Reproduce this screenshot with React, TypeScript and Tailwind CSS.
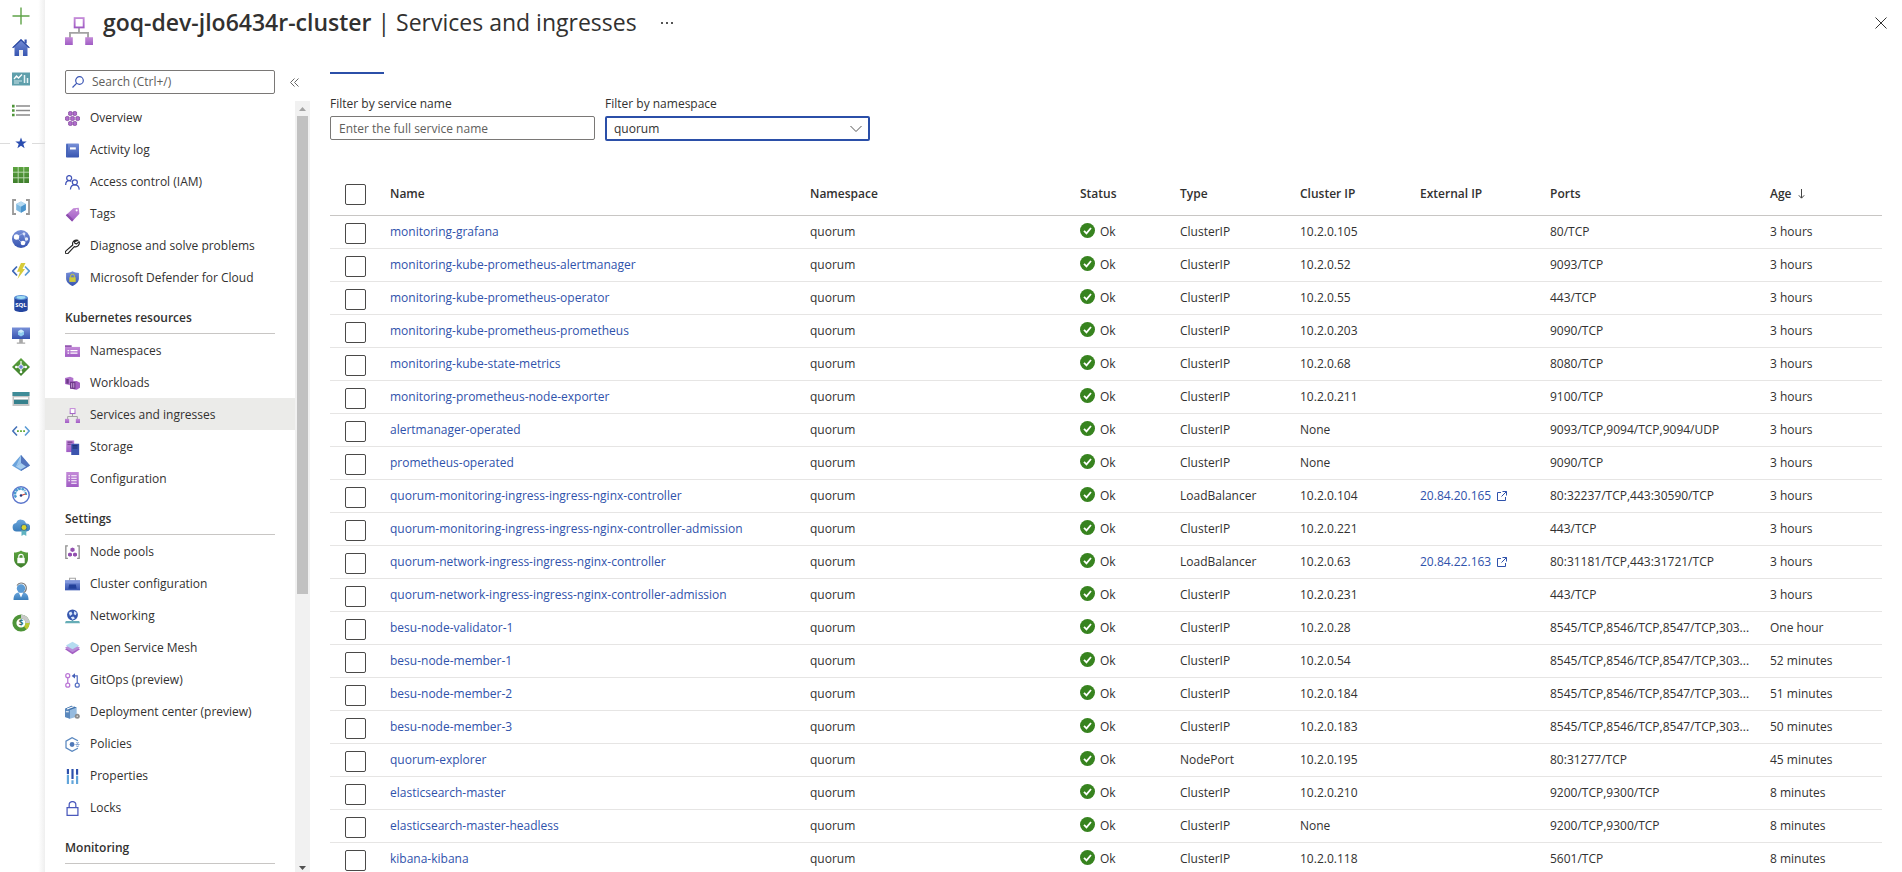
import type { ReactNode } from 'react';

interface MenuItem {
  label: string;
  icon: ReactNode;
  active?: boolean;
}

interface Service {
  name: string;
  type: string;
  clusterIp: string;
  externalIp?: string;
  ports: string;
  age: string;
}

// Shared gradients, referenced by id from the icons below
function Gradients() {
  return (
    <svg width="0" height="0" className="absolute" aria-hidden="true">
      <defs>
        <linearGradient id="purple" x1="0" y1="0" x2="0" y2="1">
          <stop offset="0" stopColor="#c48bd8" />
          <stop offset="1" stopColor="#a05cc4" />
        </linearGradient>
        <linearGradient id="blue" x1="0" y1="0" x2="0" y2="1">
          <stop offset="0" stopColor="#7890d8" />
          <stop offset="1" stopColor="#3654b0" />
        </linearGradient>
        <linearGradient id="sky" x1="0" y1="0" x2="0" y2="1">
          <stop offset="0" stopColor="#6aa6dc" />
          <stop offset="1" stopColor="#3a7cba" />
        </linearGradient>
        <linearGradient id="green" x1="0" y1="0" x2="0" y2="1">
          <stop offset="0" stopColor="#5ca33f" />
          <stop offset="1" stopColor="#3f7f2c" />
        </linearGradient>
      </defs>
    </svg>
  );
}

function Icon({ size = 18, children }: { size?: number; children: ReactNode }) {
  return (
    <svg width={size} height={size} viewBox="0 0 18 18" fill="none" className="shrink-0" aria-hidden="true">
      {children}
    </svg>
  );
}

function ServicesShape() {
  return (
    <>
      <path d="M9 7v3.200M3.200 13.500v-3.300h11.600v3.300" stroke="#a3a3a3" strokeWidth="1.200" />
      <rect x="6.200" y="0.700" width="5.800" height="6" fill="#fff" stroke="url(#purple)" strokeWidth="1.200" />
      <rect x="0" y="13" width="5" height="5" fill="url(#purple)" />
      <rect x="13" y="13" width="5" height="5" fill="url(#purple)" />
    </>
  );
}

const railItems = [
  { label: 'Create a resource', icon: <path d="M9 0.500v17M0.500 9h17" stroke="#5fa348" strokeWidth="1.400" /> },
  {
    label: 'Home',
    icon: (
      <>
        <path d="M12.500 1.500h2.200v4h-2.200z" fill="#3654b0" />
        <path d="M9 1 17.500 9.500H15.500V18H2.500V9.500H.5z" fill="url(#blue)" />
        <path d="M9 1 17.800 9.400l-.8.9L9 2.800 1 10.300l-.8-.9z" fill="#2c49a0" />
        <path d="M7 12h4v6H7z" fill="#f0f0f0" />
      </>
    ),
  },
  {
    label: 'Dashboard',
    icon: (
      <>
        <rect y="2.500" width="18" height="13" fill="#5f9fab" />
        <path d="M2 9l2.500-3 2 2L10 4.500" stroke="#fff" strokeWidth="1.300" />
        <path d="M2 11h8M2 13h5" stroke="#cfe6ea" strokeWidth="1" />
        <path d="M12.500 5v8M15.500 8v5" stroke="#e6f3f5" strokeWidth="1.500" />
      </>
    ),
  },
  {
    label: 'All services',
    icon: (
      <>
        <path d="M4 4h14M4 8.500h14M4 13h14" stroke="#8a8a8a" strokeWidth="1.400" />
        <path d="M0 2.800h2.600v2.600H0zM0 7.200h2.600v2.600H0zM0 11.700h2.600v2.600H0z" fill="#4e9438" />
      </>
    ),
  },
  {
    label: 'Favorites',
    icon: <path d="M9 3.500l1.500 4h4.200l-3.400 2.600 1.300 4.200L9 11.800l-3.600 2.500 1.300-4.200-3.400-2.600h4.200z" fill="#2a4db0" />,
  },
  {
    label: 'All resources',
    icon: (
      <>
        <path d="M1 1h16v16H1z" fill="url(#green)" />
        <path d="M6.200 1v16M11.800 1v16M1 6.200h16M1 11.800h16" stroke="#c2dfb8" strokeWidth="0.900" />
      </>
    ),
  },
  {
    label: 'Resource groups',
    icon: (
      <>
        <path d="M4 2H1v14h3M14 2h3v14h-3" stroke="#999" strokeWidth="1.800" />
        <path d="M9 3.500 13.800 6v6L9 14.700 4.200 12V6z" fill="#7db8e0" />
        <path d="M9 3.500 13.800 6 9 8.800 4.200 6z" fill="#b5daf2" />
        <path d="M9 8.800 13.800 6v6L9 14.700z" fill="#4b94cc" />
      </>
    ),
  },
  {
    label: 'App Services',
    icon: (
      <>
        <circle cx="9" cy="9" r="9" fill="url(#blue)" />
        <path d="M4 7l8-4M4.500 7.500 10 13M12 3.500l2 8M10 13l4-1" stroke="#a9bbec" strokeWidth="0.800" />
        <circle cx="4.500" cy="7" r="2.700" fill="#fff" />
        <circle cx="12" cy="4" r="1.400" fill="#dbe3fa" />
        <circle cx="11" cy="13" r="2.300" fill="#fff" />
        <circle cx="14.500" cy="9" r="1.700" fill="#e6ecfb" />
      </>
    ),
  },
  {
    label: 'Function App',
    icon: (
      <>
        <path d="M5 4.500.8 9 5 13.500" stroke="#3e68b8" strokeWidth="1.700" />
        <path d="M13 4.500 17.200 9 13 13.500" stroke="#5a9bd5" strokeWidth="1.700" />
        <path d="M9 1h4.500L10.500 7H13L5.500 17 8 9.800H5z" fill="#d6cb3a" />
      </>
    ),
  },
  {
    label: 'SQL databases',
    icon: (
      <>
        <path d="M2.300 3.500v12C2.300 17 5.500 18 9 18s6.700-1 6.700-2.500v-12z" fill="#2445a0" />
        <ellipse cx="9" cy="3.500" rx="6.700" ry="2.500" fill="#5c93d8" />
        <ellipse cx="9" cy="3.500" rx="4.500" ry="1.400" fill="#a0dcf2" />
        <text x="9" y="12.500" textAnchor="middle" fontSize="6" fontWeight="700" fill="#fff">
          SQL
        </text>
      </>
    ),
  },
  {
    label: 'Virtual machines',
    icon: (
      <>
        <rect y="1.500" width="18" height="11.500" fill="url(#blue)" />
        <path d="M9 3.500l3 1.700v3.600l-3 1.700-3-1.700V5.200z" fill="#8fcdf0" />
        <path d="M9 3.500l3 1.700L9 7 6 5.200z" fill="#cdeafa" />
        <path d="M7.200 13h3.600v3.500h2.400v1.200H4.800v-1.200h2.400z" fill="#a8a8a8" />
      </>
    ),
  },
  {
    label: 'Load balancers',
    icon: (
      <>
        <path d="M9 0l9 9-9 9-9-9z" fill="url(#green)" />
        <path d="M9 3v11M5 9h8" stroke="#fff" strokeWidth="1.200" />
        <circle cx="9" cy="9" r="2.300" fill="#7083d8" stroke="#fff" strokeWidth="0.800" />
        <circle cx="4.300" cy="9" r="1.300" fill="#fff" />
        <circle cx="13.700" cy="9" r="1.300" fill="#fff" />
        <circle cx="9" cy="14" r="1.300" fill="#fff" />
      </>
    ),
  },
  {
    label: 'Storage accounts',
    icon: (
      <>
        <path d="M.5 2h17v14H.5z" fill="#c4c4c4" />
        <path d="M.5 2h17v4H.5z" fill="#3f8c98" />
        <path d="M2 7.300h14v2H2z" fill="#fff" />
        <path d="M2 9.800h14V14H2z" fill="#35808c" />
      </>
    ),
  },
  {
    label: 'Virtual networks',
    icon: (
      <>
        <path d="M5 4.500.8 9 5 13.500" stroke="#4673b8" strokeWidth="1.600" />
        <path d="M13 4.500 17.200 9 13 13.500" stroke="#5a9bd5" strokeWidth="1.600" />
        <path d="M5 8.200h1.800v1.800H5zM8.100 8.200h1.800v1.800H8.100zM11.200 8.200H13v1.800h-1.800z" fill="#60aa38" />
      </>
    ),
  },
  {
    label: 'Azure Active Directory',
    icon: (
      <>
        <path d="M9 1 0 11.500l9 5.500 9-5.500z" fill="#6ba3dc" />
        <path d="M9 1v16l9-5.500z" fill="#5375bd" />
        <path d="M9 9l5 3.500L9 15.500 4 12.500z" fill="#a7cdef" />
        <path d="M9 1 4 12.500 9 9z" fill="#9cc6ec" />
      </>
    ),
  },
  {
    label: 'Monitor',
    icon: (
      <>
        <circle cx="9" cy="9" r="8.200" fill="#fff" stroke="#5b76cc" strokeWidth="1.500" />
        <path d="M4 11.500A5.500 5.500 0 0 1 13 5" stroke="#4a9bd0" strokeWidth="2.500" strokeDasharray="2.600 0.600" />
        <path d="M13.200 6a5.500 5.500 0 0 1 1 3" stroke="#4a9bd0" strokeWidth="2" />
        <path d="M9 9.500l4.500-1.500" stroke="#d04434" strokeWidth="1.300" />
        <circle cx="9" cy="9.500" r="1.300" fill="#27357a" />
      </>
    ),
  },
  {
    label: 'Advisor',
    icon: (
      <>
        <path d="M4.500 13.500a4.300 4.300 0 0 1-.4-8.500A5.200 5.200 0 0 1 14 5.500a4 4 0 0 1 .5 8z" fill="url(#sky)" />
        <path d="M9.500 11h4.800v7l-2.400-1.500L9.500 18z" fill="#5fb3c2" />
        <circle cx="12" cy="9.500" r="3.300" fill="#3d6f8a" />
        <circle cx="12" cy="9.500" r="2.400" fill="#d8d32f" />
      </>
    ),
  },
  {
    label: 'Microsoft Defender for Cloud',
    icon: (
      <>
        <path d="M9 .5c2 1.400 4.500 2 7 2V9c0 4.500-3.500 7-7 8.800C5.500 16 2 13.500 2 9V2.500c2.500 0 5-.6 7-2z" fill="url(#green)" />
        <rect x="5.300" y="7.800" width="7.400" height="5.400" fill="#fff" />
        <path d="M6.800 8V6.500a2.200 2.200 0 0 1 4.400 0V8" stroke="#fff" strokeWidth="1.200" />
      </>
    ),
  },
  {
    label: 'Help and support',
    icon: (
      <>
        <path d="M5 3.500A5 5 0 0 1 14.300 6c0 2.500-1.200 4-3 4.800" stroke="#777" strokeWidth="1.200" />
        <path d="M1.500 18c0-4.500 1.500-7 5-7.500h5c3.500.5 5 3 5 7.500z" fill="url(#sky)" />
        <circle cx="9" cy="6.500" r="4.200" fill="#5b9bd5" />
        <path d="M7 11h4l-2 4.500z" fill="#fff" />
      </>
    ),
  },
  {
    label: 'Cost Management',
    icon: (
      <>
        <circle cx="9" cy="9" r="6.600" stroke="#4e9438" strokeWidth="4" />
        <path d="M9 2.400A6.600 6.600 0 0 1 15.600 9" stroke="#c9c9c9" strokeWidth="4" />
        <path d="M15.600 9a6.600 6.600 0 0 1-2.300 5" stroke="#bcc831" strokeWidth="4" />
        <text x="9" y="12" textAnchor="middle" fontSize="8" fontWeight="700" fill="#2e6e74">
          $
        </text>
      </>
    ),
  },
];

const overviewMenu: MenuItem[] = [
  {
    label: 'Overview',
    icon: (
      <g fill="#b06ccc" stroke="#7d4496" strokeWidth="0.800">
        <path d="M4.300 1.200 6.400.4l2.200.8v3.600l-2.200.8-2.100-.8zM9.600 1.200l2.100-.8 2.200.8v3.600l-2.200.8-2.100-.8zM.6 7.200l2.200-.8 2.200.8v3.600l-2.200.8-2.200-.8zM6.800 7.200 9 6.400l2.200.8v3.600l-2.200.8-2.200-.8zM13 7.200l2.200-.8 2.200.8v3.600l-2.200.8-2.200-.8zM4.300 13.200l2.100-.8 2.200.8v3.600l-2.200.8-2.100-.8zM9.600 13.200l2.100-.8 2.200.8v3.600l-2.200.8-2.100-.8z" />
      </g>
    ),
  },
  {
    label: 'Activity log',
    icon: (
      <>
        <rect x="1.200" y=".5" width="15.600" height="17" rx="1" fill="url(#blue)" />
        <path d="M1.700 1.500h1.800v15H1.700z" fill="#4564b8" />
        <path d="M6 5.200h7v2.600H6z" fill="#fff" />
      </>
    ),
  },
  {
    label: 'Access control (IAM)',
    icon: (
      <g stroke="#4254b8" strokeWidth="1.500">
        <circle cx="5" cy="3.700" r="3" />
        <path d="M.8 12c0-3 1.500-5.200 4.200-5.200 1 0 1.900.3 2.600.9" />
        <circle cx="11.800" cy="8.800" r="3" />
        <path d="M6.500 17.500c.2-3.500 2-5.600 5.300-5.600s5 2.100 5.300 5.600" />
      </g>
    ),
  },
  {
    label: 'Tags',
    icon: (
      <>
        <path d="M10 1.500 16.500.8 17.300 8 8.500 17.300 1 10z" fill="url(#purple)" />
        <path d="M1 10l7.500 7.300 1.800-2L3 8z" fill="#8d4eae" />
        <circle cx="14" cy="4" r="1.300" fill="#fff" />
      </>
    ),
  },
  {
    label: 'Diagnose and solve problems',
    icon: (
      <path
        d="M15.500 1.600a4.600 4.600 0 0 0-6.200 5.600L1.500 14a2 2 0 1 0 2.700 2.600l7-7.500a4.600 4.600 0 0 0 5.700-6l-2.900 2.700-2.100-.6-.6-2z"
        stroke="#222"
        strokeWidth="1.400"
        strokeLinejoin="round"
      />
    ),
  },
  {
    label: 'Microsoft Defender for Cloud',
    icon: (
      <>
        <path d="M9 .3c2.300 1.500 5 2 7.700 2V9c0 4.500-4 7.200-7.700 9C5.300 16.200 1.300 13.500 1.300 9V2.300C4 2.300 6.700 1.800 9 .3z" fill="url(#blue)" />
        <path d="M6.700 8V6.200a2.300 2.300 0 0 1 4.600 0V8" stroke="#c9c93a" strokeWidth="1.200" />
        <rect x="5.200" y="7.600" width="7.600" height="5.500" fill="#cfcb3a" />
      </>
    ),
  },
];

const kubernetesMenu: MenuItem[] = [
  {
    label: 'Namespaces',
    icon: (
      <>
        <path d="M0 1.500h8v3H0z" fill="#8f52ad" />
        <path d="M0 3.500h18v12H0z" fill="url(#purple)" />
        <path d="M3 8h2M3 11h2M6.500 8h8.500M6.500 11h8.500" stroke="#fff" strokeWidth="1.500" />
      </>
    ),
  },
  {
    label: 'Workloads',
    icon: (
      <>
        <path d="M0 2.500 6 1l4 1.500v7L6 11 0 9.500z" fill="#b173cc" />
        <path d="M1.500 3.500h3v5.800h-3z" fill="#6e3a8a" />
        <path d="M6 7l8-1 4 2v6l-4 2.500L6 15z" fill="#a35fc2" />
        <path d="M6 7h6.500v9L6 15z" fill="#6e3a8a" />
        <path d="M8 8.500v5.500M10.500 8.500v5.500" stroke="#d8b5e6" strokeWidth="1" />
      </>
    ),
  },
  { label: 'Services and ingresses', icon: <ServicesShape />, active: true },
  {
    label: 'Storage',
    icon: (
      <>
        <path d="M1.500.5h9.500v14H1.500z" fill="url(#purple)" />
        <path d="M3 2.500h6M3 5h4" stroke="#6e3a8a" strokeWidth="1.300" />
        <path d="M7.500 4.500H17V18H7.500z" fill="#3c54ae" />
        <path d="M9 7h6M9 9.500h6" stroke="#182a6c" strokeWidth="1.300" />
      </>
    ),
  },
  {
    label: 'Configuration',
    icon: (
      <>
        <path d="M1.500 0h15v18h-15z" fill="url(#purple)" />
        <path d="M4 4.500h2M7.500 4.500H14M4 7.500h2M7.500 7.500H14M4 10.500h2M7.500 10.500H14M7.500 13.500H14" stroke="#fff" strokeWidth="1.400" />
      </>
    ),
  },
];

const settingsMenu: MenuItem[] = [
  {
    label: 'Node pools',
    icon: (
      <>
        <path d="M3.500 1H1v15h2.500M14.500 1H17v15h-2.500" stroke="#8f8f8f" strokeWidth="1.600" />
        <path d="M9 3l2.500 1.200v3L9 8.400 6.500 7.200v-3zM6 9l2.400 1.100v2.800L6 14l-2.400-1.100v-2.800zM12 9l2.400 1.100v2.800L12 14l-2.400-1.100v-2.800z" fill="#9350b0" />
      </>
    ),
  },
  {
    label: 'Cluster configuration',
    icon: (
      <>
        <path d="M5.500 4.500v-3h7v3" stroke="#a5a5a5" strokeWidth="1.300" />
        <path d="M0 4h18v12H0z" fill="url(#blue)" />
        <path d="M0 4h18v3.500H0z" fill="#8197dc" />
        <path d="M5 9h8l1 5H4z" fill="#22409a" />
      </>
    ),
  },
  {
    label: 'Networking',
    icon: (
      <>
        <path d="M1 14.500h16L18 17H0z" fill="#66adb6" />
        <path d="M8 12h2v3H8z" fill="#66adb6" />
        <circle cx="9" cy="7" r="6.500" fill="#3556ae" />
        <path d="M4.500 4.500 7.500 3 9 6 6 8.500zM11 2.500l3 2-1 3-2.500-1.200zM7 10l3-1 2 2-3 2z" fill="#d8e6fa" />
      </>
    ),
  },
  {
    label: 'Open Service Mesh',
    icon: (
      <>
        <path d="M9 4.500 18 10l-9 6-9-6z" fill="#a560c4" />
        <path d="M9 2.500 18 8l-9 5.500L0 8z" fill="#b98cd9" />
        <path d="M9 1l8 4.500L9 10 1 5.500z" fill="#b4dcf0" />
      </>
    ),
  },
  {
    label: 'GitOps (preview)',
    icon: (
      <>
        <g stroke="#bb77d6" strokeWidth="1.500">
          <circle cx="3.300" cy="3.200" r="2.400" />
          <path d="M3.300 5.600v6.800" />
          <circle cx="3.300" cy="14.600" r="2.400" />
        </g>
        <g stroke="#5a72c4" strokeWidth="1.500">
          <path d="M9.500 3.500h5.200v8.800" />
          <circle cx="14.700" cy="14.600" r="2.400" />
        </g>
        <path d="M12 .3v6.400L8 3.500z" fill="#4560b8" />
      </>
    ),
  },
  {
    label: 'Deployment center (preview)',
    icon: (
      <>
        <path d="M0 4.500 8 1l6 2v11l-8 2.500-6-2z" fill="#96bbdf" />
        <path d="M0 4.500 6 6v10.500l-6-2z" fill="#5a88bc" />
        <path d="M0 4.500 8 1l6 2-8 3z" fill="#3f71ab" />
        <path d="M2.500 4.800 10.500 1.700M1 8h3.500" stroke="#fff" strokeWidth="1.300" />
        <circle cx="14.700" cy="13.500" r="3" fill="#8c8c8c" />
        <circle cx="14.700" cy="13.500" r="1" fill="#ddd" />
      </>
    ),
  },
  {
    label: 'Policies',
    icon: (
      <>
        <path d="M15.500 4.500 8.500.8 1.200 5v8l7.300 4.200 7-3.700" stroke="#5a88c0" strokeWidth="1.500" />
        <circle cx="8.500" cy="9" r="2.900" fill="#4f78b8" />
        <path d="M13.500 6.500l1.500 1 1.500-1M13.500 10.500l1.500 1 1.500-1M12.500 9h5" stroke="#8aa8d4" strokeWidth="1.300" />
      </>
    ),
  },
  {
    label: 'Properties',
    icon: (
      <>
        <path d="M3.500 0v6M9 0v12M14.500 0v7" stroke="#2c50ac" strokeWidth="2.600" />
        <path d="M3.500 7v11M9 13.500V18M14.500 8v10" stroke="#62a5da" strokeWidth="2.600" />
      </>
    ),
  },
  {
    label: 'Locks',
    icon: (
      <g stroke="#4a59bc" strokeWidth="1.500">
        <path d="M2.500 7.800h13v9.400h-13z" />
        <path d="M5 7.800V4.700a4 4 0 0 1 8 0v3.100" />
      </g>
    ),
  },
];

const services: Service[] = [
  { name: 'monitoring-grafana', type: 'ClusterIP', clusterIp: '10.2.0.105', ports: '80/TCP', age: '3 hours' },
  { name: 'monitoring-kube-prometheus-alertmanager', type: 'ClusterIP', clusterIp: '10.2.0.52', ports: '9093/TCP', age: '3 hours' },
  { name: 'monitoring-kube-prometheus-operator', type: 'ClusterIP', clusterIp: '10.2.0.55', ports: '443/TCP', age: '3 hours' },
  { name: 'monitoring-kube-prometheus-prometheus', type: 'ClusterIP', clusterIp: '10.2.0.203', ports: '9090/TCP', age: '3 hours' },
  { name: 'monitoring-kube-state-metrics', type: 'ClusterIP', clusterIp: '10.2.0.68', ports: '8080/TCP', age: '3 hours' },
  { name: 'monitoring-prometheus-node-exporter', type: 'ClusterIP', clusterIp: '10.2.0.211', ports: '9100/TCP', age: '3 hours' },
  { name: 'alertmanager-operated', type: 'ClusterIP', clusterIp: 'None', ports: '9093/TCP,9094/TCP,9094/UDP', age: '3 hours' },
  { name: 'prometheus-operated', type: 'ClusterIP', clusterIp: 'None', ports: '9090/TCP', age: '3 hours' },
  { name: 'quorum-monitoring-ingress-ingress-nginx-controller', type: 'LoadBalancer', clusterIp: '10.2.0.104', externalIp: '20.84.20.165', ports: '80:32237/TCP,443:30590/TCP', age: '3 hours' },
  { name: 'quorum-monitoring-ingress-ingress-nginx-controller-admission', type: 'ClusterIP', clusterIp: '10.2.0.221', ports: '443/TCP', age: '3 hours' },
  { name: 'quorum-network-ingress-ingress-nginx-controller', type: 'LoadBalancer', clusterIp: '10.2.0.63', externalIp: '20.84.22.163', ports: '80:31181/TCP,443:31721/TCP', age: '3 hours' },
  { name: 'quorum-network-ingress-ingress-nginx-controller-admission', type: 'ClusterIP', clusterIp: '10.2.0.231', ports: '443/TCP', age: '3 hours' },
  { name: 'besu-node-validator-1', type: 'ClusterIP', clusterIp: '10.2.0.28', ports: '8545/TCP,8546/TCP,8547/TCP,303...', age: 'One hour' },
  { name: 'besu-node-member-1', type: 'ClusterIP', clusterIp: '10.2.0.54', ports: '8545/TCP,8546/TCP,8547/TCP,303...', age: '52 minutes' },
  { name: 'besu-node-member-2', type: 'ClusterIP', clusterIp: '10.2.0.184', ports: '8545/TCP,8546/TCP,8547/TCP,303...', age: '51 minutes' },
  { name: 'besu-node-member-3', type: 'ClusterIP', clusterIp: '10.2.0.183', ports: '8545/TCP,8546/TCP,8547/TCP,303...', age: '50 minutes' },
  { name: 'quorum-explorer', type: 'NodePort', clusterIp: '10.2.0.195', ports: '80:31277/TCP', age: '45 minutes' },
  { name: 'elasticsearch-master', type: 'ClusterIP', clusterIp: '10.2.0.210', ports: '9200/TCP,9300/TCP', age: '8 minutes' },
  { name: 'elasticsearch-master-headless', type: 'ClusterIP', clusterIp: 'None', ports: '9200/TCP,9300/TCP', age: '8 minutes' },
  { name: 'kibana-kibana', type: 'ClusterIP', clusterIp: '10.2.0.118', ports: '5601/TCP', age: '8 minutes' },
];

function Rail() {
  return (
    <nav aria-label="Favorites" className="w-[45px] shrink-0 bg-gradient-to-r from-white from-85% to-[#efefef]">
      {railItems.map((item, i) => (
        <a
          key={item.label}
          href="#"
          aria-label={item.label}
          className={`flex items-center ${i === 0 ? 'h-[31px]' : 'h-8'} ${item.label === 'Favorites' ? '' : 'pl-3'}`}
        >
          {item.label === 'Favorites' ? (
            <>
              <span className="w-[10px] h-px bg-[#dcdcdc] mr-[2px]" />
              <Icon>{item.icon}</Icon>
              <span className="flex-1 h-px bg-[#dcdcdc] ml-[2px]" />
            </>
          ) : (
            <Icon>{item.icon}</Icon>
          )}
        </a>
      ))}
    </nav>
  );
}

function MenuList({ items }: { items: MenuItem[] }) {
  return (
    <ul>
      {items.map((item) => (
        <li key={item.label}>
          <a href="#" className={`flex items-center gap-[10px] h-8 pl-5 pt-[2px] ${item.active ? 'bg-[#ebebe9]' : ''}`}>
            <Icon size={15}>{item.icon}</Icon>
            <span>{item.label}</span>
          </a>
        </li>
      ))}
    </ul>
  );
}

function MenuHeading({ children }: { children: ReactNode }) {
  return (
    <h2 className="h-[41px] ml-5 mr-5 flex items-center pt-[10px] border-b border-[#c8c6c4] font-semibold text-[#323130]">
      {children}
    </h2>
  );
}

function Scrollbar() {
  return (
    <div className="w-[15px] shrink-0 bg-[#f1f1f1] flex flex-col items-center" aria-hidden="true">
      <svg width="15" height="15" viewBox="0 0 15 15" className="shrink-0">
        <path d="M4 10l3.500-4 3.500 4z" fill="#a3a3a3" />
      </svg>
      <div className="w-[11px] h-[62%] bg-[#c1c1c1]" />
      <div className="flex-1" />
      <svg width="15" height="15" viewBox="0 0 15 15" className="shrink-0">
        <path d="M4 9l3.500 4L11 9z" fill="#505050" />
      </svg>
    </div>
  );
}

function SideMenu() {
  return (
    <div className="w-[265px] shrink-0 flex flex-col min-h-0">
      <div className="flex items-center h-[37px] pl-5 pb-px shrink-0">
        <label className="w-[210px] h-6 flex items-center gap-2 pl-[6px] border border-[#7a7876] rounded-xs">
          <svg width="12" height="12" viewBox="0 0 12 12" fill="none" stroke="#3a55b4" strokeWidth="1.200" aria-hidden="true">
            <circle cx="7.500" cy="4.500" r="3.800" />
            <path d="M4.800 7.200.5 11.500" />
          </svg>
          <input
            type="text"
            aria-label="Search"
            placeholder="Search (Ctrl+/)"
            className="flex-1 min-w-0 outline-none bg-transparent placeholder:text-[#605e5c]"
          />
        </label>
        <button aria-label="Collapse menu" className="ml-[15px]">
          <svg width="9" height="9" viewBox="0 0 9 9" fill="none" stroke="#666" strokeWidth="1" aria-hidden="true">
            <path d="M4.500.5l-4 4 4 4M8.500.5l-4 4 4 4" />
          </svg>
        </button>
      </div>
      <div className="flex flex-1 min-h-0">
        <nav aria-label="Cluster menu" className="flex-1 overflow-hidden">
          <MenuList items={overviewMenu} />
          <MenuHeading>Kubernetes resources</MenuHeading>
          <MenuList items={kubernetesMenu} />
          <MenuHeading>Settings</MenuHeading>
          <MenuList items={settingsMenu} />
          <MenuHeading>Monitoring</MenuHeading>
        </nav>
        <Scrollbar />
      </div>
    </div>
  );
}

function Filters() {
  return (
    <div className="flex gap-[10px] pt-[22px]">
      <div className="w-[265px]">
        <label htmlFor="service-name" className="block h-5 leading-4">
          Filter by service name
        </label>
        <input
          id="service-name"
          type="text"
          placeholder="Enter the full service name"
          className="block w-full h-6 px-2 border border-[#7a7876] rounded-xs outline-none placeholder:text-[#605e5c]"
        />
      </div>
      <div className="w-[265px]">
        <label htmlFor="namespace" className="block h-5 leading-4">
          Filter by namespace
        </label>
        <div className="relative">
          <select
            id="namespace"
            defaultValue="quorum"
            className="block w-full h-[25px] px-[7px] appearance-none border-2 border-[#2b4fa8] rounded-xs bg-white outline-none"
          >
            <option>quorum</option>
          </select>
          <svg
            width="12"
            height="8"
            viewBox="0 0 12 8"
            fill="none"
            stroke="#555"
            className="absolute right-2 top-[9px] pointer-events-none"
            aria-hidden="true"
          >
            <path d="M.5 1 6 6.500 11.500 1" />
          </svg>
        </div>
      </div>
    </div>
  );
}

function RowCheckbox({ label }: { label: string }) {
  return (
    <input
      type="checkbox"
      aria-label={label}
      className="block w-[21px] h-[21px] ml-[15px] appearance-none bg-white border border-[#4a4948] rounded-xs"
    />
  );
}

function ServicesTable() {
  return (
    <table className="w-full mt-[31px] table-fixed border-separate border-spacing-0 text-left">
      <colgroup>
        <col className="w-[60px]" />
        <col />
        <col className="w-[270px]" />
        <col className="w-[100px]" />
        <col className="w-[120px]" />
        <col className="w-[120px]" />
        <col className="w-[130px]" />
        <col className="w-[220px]" />
        <col className="w-[112px]" />
      </colgroup>
      <thead>
        <tr className="[&>th]:h-11 [&>th]:p-0 [&>th]:border-b [&>th]:border-[#c8c6c4] [&>th]:font-semibold [&>th:first-child]:pt-[2px]">
          <th>
            <RowCheckbox label="Select all" />
          </th>
          <th>Name</th>
          <th>Namespace</th>
          <th>Status</th>
          <th>Type</th>
          <th>Cluster IP</th>
          <th>External IP</th>
          <th>Ports</th>
          <th>
            <span className="flex items-center gap-[6px]">
              Age
              <svg width="7" height="10" viewBox="0 0 7 10" fill="none" stroke="#444" aria-hidden="true">
                <path d="M3.500 0v9M.8 6.300l2.700 2.900 2.700-2.900" />
              </svg>
            </span>
          </th>
        </tr>
      </thead>
      <tbody>
        {services.map((service) => (
          <tr
            key={service.name}
            className="[&>td]:h-[33px] [&>td]:p-0 [&>td]:border-b [&>td]:border-[#e6e5e4] [&>td]:whitespace-nowrap [&>td:first-child]:pt-[3px]"
          >
            <td>
              <RowCheckbox label={`Select ${service.name}`} />
            </td>
            <td>
              <a href="#" className="text-[#2f52ab]">
                {service.name}
              </a>
            </td>
            <td>quorum</td>
            <td>
              <span className="flex items-center gap-[5px]">
                <svg width="15" height="15" viewBox="0 0 15 15" fill="none" className="mb-[3px]" aria-hidden="true">
                  <circle cx="7.500" cy="7.500" r="7.500" fill="#37831f" />
                  <path d="M4 7.800l2.500 2.500L11 5" stroke="#fff" strokeWidth="1.800" />
                </svg>
                Ok
              </span>
            </td>
            <td>{service.type}</td>
            <td>{service.clusterIp}</td>
            <td>
              {service.externalIp && (
                <a href="#" className="flex items-center gap-[6px] text-[#2f52ab]">
                  {service.externalIp}
                  <svg width="10" height="10" viewBox="0 0 10 10" fill="none" stroke="#2f52ab" aria-hidden="true">
                    <path d="M4 1.500H.5v8h8V6M5.500.5h4v4M9.500.5l-5 5" />
                  </svg>
                </a>
              )}
            </td>
            <td>{service.ports}</td>
            <td>{service.age}</td>
          </tr>
        ))}
      </tbody>
    </table>
  );
}

export default function App() {
  return (
    <div className="h-screen flex overflow-hidden bg-white text-[#323130] text-[12px] leading-4 font-['Open_Sans',sans-serif]">
      <Gradients />
      <Rail />
      <div className="flex-1 min-w-0 flex flex-col">
        <header className="h-16 shrink-0 flex items-start pl-5 pr-[15px]">
          <div className="pt-[17px]">
            <Icon size={28}>
              <ServicesShape />
            </Icon>
          </div>
          <h1 className="pl-[10px] pt-[7px] text-[23px] leading-[30px] whitespace-nowrap">
            <span className="font-semibold">goq-dev-jlo6434r-cluster</span> | Services and ingresses
          </h1>
          <button aria-label="More" className="ml-6 h-[46px] flex items-center">
            <svg width="12" height="2" viewBox="0 0 12 2" fill="#555" aria-hidden="true">
              <path d="M0 0h2v2H0zM5 0h2v2H5zM10 0h2v2h-2z" />
            </svg>
          </button>
          <button aria-label="Close" className="ml-auto h-[46px] flex items-center">
            <svg width="12" height="12" viewBox="0 0 12 12" fill="none" stroke="#333" aria-hidden="true">
              <path d="M.5.5l11 11M11.500.5l-11 11" />
            </svg>
          </button>
        </header>
        <div className="flex flex-1 min-h-0">
          <SideMenu />
          <main className="flex-1 min-w-0 overflow-hidden pl-5 pr-5">
            <div className="pt-2">
              <div className="w-[54px] h-[2px] bg-[#2b4fa8]" />
            </div>
            <Filters />
            <ServicesTable />
          </main>
        </div>
      </div>
    </div>
  );
}
